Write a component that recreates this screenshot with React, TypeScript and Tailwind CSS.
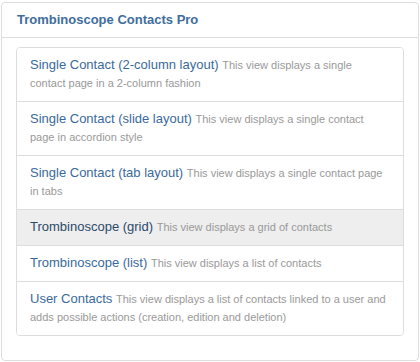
import React from "react";

const views = [
  {
    title: "Single Contact (2-column layout)",
    desc: "This view displays a single contact page in a 2-column fashion",
  },
  {
    title: "Single Contact (slide layout)",
    desc: "This view displays a single contact page in accordion style",
  },
  {
    title: "Single Contact (tab layout)",
    desc: "This view displays a single contact page in tabs",
  },
  {
    title: "Trombinoscope (grid)",
    desc: "This view displays a grid of contacts",
    active: true,
  },
  {
    title: "Trombinoscope (list)",
    desc: "This view displays a list of contacts",
  },
  {
    title: "User Contacts",
    desc: "This view displays a list of contacts linked to a user and adds possible actions (creation, edition and deletion)",
  },
];

export default function App() {
  return (
    <div className="w-[420px] h-[362px] bg-white pt-[2px] pl-[1px] font-['Liberation_Sans',Arial,sans-serif]">
      <div className="w-[418px] h-[359px] border border-[#dddddd] rounded-[4px] bg-white">
        {/* Header */}
        <div className="px-[15px] py-[8px] border-b border-[#dddddd]">
          <h2 className="text-[13px] leading-[18px] font-bold text-[#3e6d9e]">
            Trombinoscope Contacts Pro
          </h2>
        </div>

        {/* Body */}
        <div className="px-[14px] pt-[9px]">
          <ul className="border border-[#dddddd] rounded-[4px] overflow-hidden">
            {views.map((v, i) => (
              <li
                key={i}
                className={`px-[13px] pt-[8px] pb-[9px] text-[13px] leading-[18px] ${
                  i < views.length - 1 ? "border-b border-[#dddddd]" : ""
                } ${v.active ? "bg-[#eeeeee]" : "bg-white"}`}
              >
                <span
                  className={`leading-none ${
                    v.active ? "text-[#2b4a6b]" : "text-[#3a6a9c]"
                  }`}
                >
                  {v.title}
                </span>{" "}
                <span className="text-[11px] leading-none text-[#999999]">
                  {v.desc}
                </span>
              </li>
            ))}
          </ul>
        </div>
      </div>
    </div>
  );
}
